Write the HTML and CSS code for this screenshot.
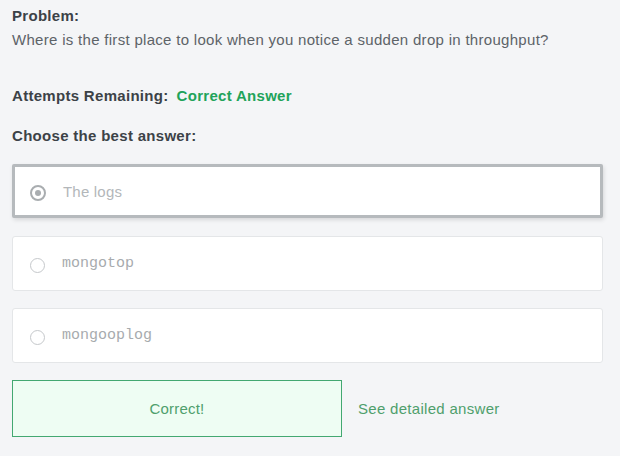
FILE: index.html
```html
<!DOCTYPE html>
<html>
<head>
<meta charset="utf-8">
<link rel="stylesheet" href="styles.css">
</head>
<body>
<div class="page">
  <div class="problem">
    <div class="label">Problem:</div>
    <div class="question">Where is the first place to look when you notice a sudden drop in throughput?</div>
  </div>
  <div class="attempts"><span class="label">Attempts Remaining:</span><span class="correct-answer">Correct Answer</span></div>
  <div class="label choose">Choose the best answer:</div>
  <div class="options">
    <div class="option selected"><span class="radio checked"></span><span class="opt-text">The logs</span></div>
    <div class="option"><span class="radio"></span><span class="opt-text mono">mongotop</span></div>
    <div class="option"><span class="radio"></span><span class="opt-text mono">mongooplog</span></div>
  </div>
  <div class="actions">
    <div class="result">Correct!</div>
    <a class="detail">See detailed answer</a>
  </div>
</div>
</body>
</html>
```
FILE: styles.css
```css
html, body { margin: 0; padding: 0; }
body { background: #f4f5f7; font-family: "Liberation Sans", Arial, sans-serif; color: #3c4247; }
.page { padding: 6px 17px 0 12px; }
.label { font-family: "Liberation Sans", Arial, sans-serif; font-weight: 700; font-size: 15px; letter-spacing: 0.3px; color: #3c4247; }
.problem .label { line-height: 20px; }
.question { font-size: 15px; line-height: 28px; color: #5d6368; letter-spacing: 0.3px; }
.attempts { margin-top: 30px; line-height: 24px; display: flex; gap: 8px; }
.correct-answer { font-family: "Liberation Sans", Arial, sans-serif; font-weight: 700; font-size: 15px; letter-spacing: 0.3px; color: #21a35a; }
.choose { margin-top: 16px; line-height: 24px; }
.options { margin-top: 16px; display: flex; flex-direction: column; gap: 17px; }
.option { background: #fff; border: 1px solid #e4e6e8; border-radius: 3px; height: 53px; display: flex; align-items: center; padding-left: 17px; gap: 17px; }
.option.selected { border: 3px solid #b6babd; border-radius: 2px; height: 48px; padding-left: 15px; margin-bottom: 1px; box-shadow: 1px 2px 4px rgba(0,0,0,0.12); }
.radio { width: 15px; height: 15px; border: 1px solid #c5c8cb; border-radius: 50%; box-sizing: border-box; position: relative; margin-top: 4px; flex: none; }
.radio.checked { width: 16px; height: 16px; border: 2px solid #a9adb0; margin-top: 3px; }
.radio.checked::after { content: ""; position: absolute; left: 50%; top: 50%; width: 6px; height: 6px; margin: -3px 0 0 -3px; border-radius: 50%; background: #a9adb0; }
.opt-text { font-size: 15px; color: #b3b7ba; letter-spacing: 0.2px; }
.opt-text.mono { font-family: "Liberation Mono", monospace; color: #a7abae; letter-spacing: 0; }
.actions { margin-top: 17px; display: flex; align-items: center; gap: 16px; }
.result { width: 328px; height: 55px; border: 1px solid #43a871; background: #eefdf3; display: flex; align-items: center; justify-content: center; font-size: 15px; letter-spacing: 0.2px; color: #4f9f6c; }
.detail { font-size: 15px; letter-spacing: 0.3px; color: #4f9f6c; }
```
